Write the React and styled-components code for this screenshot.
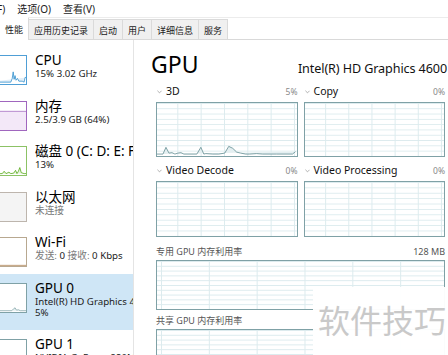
import styled, { createGlobalStyle } from 'styled-components';

const GlobalStyle = createGlobalStyle`
  html, body {
    margin: 0;
    padding: 0;
    background: #fff;
    overflow: hidden;
  }
  body {
    font-family: "Noto Sans", "Noto Sans CJK SC", sans-serif;
    color: #111;
  }
`;

const GPU_BORDER = '#7fa1a6';
const GPU_GRID = '#dcebee';

const Muted = styled.span`
  color: #7a7a7a;
`;

function getSidebarItems() {
  return [
    { id: 'cpu', title: 'CPU', lines: ['15% 3.02 GHz'] },
    { id: 'mem', title: '内存', lines: ['2.5/3.9 GB (64%)'] },
    { id: 'disk', title: '磁盘 0 (C: D: E: F:', lines: ['13%'] },
    { id: 'eth', title: '以太网', lines: [<Muted key="a">未连接</Muted>] },
    {
      id: 'wifi',
      title: 'Wi-Fi',
      lines: [
        <span key="a">
          <Muted>发送:</Muted> 0 <Muted>接收:</Muted> 0 Kbps
        </span>,
      ],
    },
    { id: 'gpu0', title: 'GPU 0', lines: ['Intel(R) HD Graphics 4600', '5%'], active: true },
    { id: 'gpu1', title: 'GPU 1', lines: ['NVIDIA GeForce 820M'] },
  ];
}

const thumbStyles = {
  cpu: { border: '#4f9fd6', bg: '#fff' },
  mem: { border: '#a066be', bg: '#fff' },
  disk: { border: '#8cc265', bg: '#fff' },
  eth: { border: '#bdb5ad', bg: '#f4f4f4' },
  wifi: { border: '#b8a890', bg: '#fff' },
  gpu0: { border: GPU_BORDER, bg: '#fff' },
  gpu1: { border: GPU_BORDER, bg: '#fff' },
};

function ThumbDrawing({ id }) {
  if (id === 'cpu') {
    return (
      <svg viewBox="0 0 40 30" preserveAspectRatio="none" width="100%" height="100%">
        <polyline
          points="0,28 24,28 25.5,24 26.5,17 27.5,25 28.5,21 29.5,26 31,24 32.5,27 36,27 38,28 39,23 40,23"
          fill="#e3eff8"
          stroke="#2a8ccc"
          strokeWidth="0.8"
        />
      </svg>
    );
  }
  if (id === 'mem') {
    return (
      <svg viewBox="0 0 40 30" preserveAspectRatio="none" width="100%" height="100%">
        <rect x="0" y="10" width="40" height="20" fill="#f3e8f8" />
        <line x1="0" y1="10" x2="40" y2="10" stroke="#a066be" strokeWidth="0.8" />
      </svg>
    );
  }
  if (id === 'disk') {
    return (
      <svg viewBox="0 0 40 30" preserveAspectRatio="none" width="100%" height="100%">
        <polyline
          points="0,29 15,28.5 17,26 19,28.5 22,27 24,28.5 27,28 29,25 30.5,28.5 32,26 33.5,22 35,27.5 38,28.5 40,28.5"
          fill="#e6f3dc"
          stroke="#4da60c"
          strokeWidth="0.8"
        />
      </svg>
    );
  }
  if (id === 'wifi') {
    return (
      <svg viewBox="0 0 40 30" preserveAspectRatio="none" width="100%" height="100%">
        <line x1="0" y1="29.3" x2="40" y2="29.3" stroke="#a97a4a" strokeWidth="0.8" />
      </svg>
    );
  }
  if (id === 'gpu0') {
    return (
      <svg viewBox="0 0 40 30" preserveAspectRatio="none" width="100%" height="100%">
        <polyline
          points="0,28.6 25,28.6 27,26.5 28.5,25.5 30,28 32,27.6 34,28.6 40,28.6"
          fill="#e6f0f1"
          stroke="#6f959a"
          strokeWidth="0.7"
        />
      </svg>
    );
  }
  return null;
}

function Chevron() {
  return (
    <ChevronIcon viewBox="0 0 6 4" width="5" height="4">
      <polyline points="0.5,0.5 3,3 5.5,0.5" fill="none" stroke="#8a8a8a" strokeWidth="0.8" />
    </ChevronIcon>
  );
}

const plot3d =
  '0,53 6,53 9,46 12,52 15,51.5 18,53 21,52 24,51.5 27,53 40,53 44,46 47,53 49,52.5 56,53 62,53 68,52 72,45 76,47 80,51 84,52 89,53 93,53 100,52.5 106,53 120,53 136,53 139,50.5';

export default function App() {
  const sidebarItems = getSidebarItems();

  return (
    <Window>
      <GlobalStyle />
      <MenuBar>
        <MenuItem>文件(F)</MenuItem>
        <MenuItem>选项(O)</MenuItem>
        <MenuItem>查看(V)</MenuItem>
      </MenuBar>

      <TabBar>
        <Tab $active>性能</Tab>
        <Tab>应用历史记录</Tab>
        <Tab>启动</Tab>
        <Tab>用户</Tab>
        <Tab>详细信息</Tab>
        <Tab>服务</Tab>
      </TabBar>

      <Body>
        <Sidebar>
          {sidebarItems.map((item) => (
            <SideItem key={item.id} $active={item.active} $tall={item.lines.length > 1}>
              <Thumb $border={thumbStyles[item.id].border} $bg={thumbStyles[item.id].bg}>
                <ThumbDrawing id={item.id} />
              </Thumb>
              <SideInfo>
                <SideTitle>{item.title}</SideTitle>
                {item.lines.map((line, i) => (
                  <SideSub key={i}>{line}</SideSub>
                ))}
              </SideInfo>
            </SideItem>
          ))}
        </Sidebar>

        <Main>
          <Header>
            <BigTitle>GPU</BigTitle>
            <Model>Intel(R) HD Graphics 4600</Model>
          </Header>

          <Graphs>
            <GraphGrid>
              <GraphCell>
                <GraphLabel>
                  <Chevron />
                  <span>3D</span>
                  <Pct>5%</Pct>
                </GraphLabel>
                <GraphBox $h={55} $offset={-3}>
                  <svg viewBox="0 0 140 55" preserveAspectRatio="none" width="100%" height="100%">
                    <polyline points={plot3d} fill="#e4eff1" stroke="#5f8a90" strokeWidth="0.8" />
                  </svg>
                </GraphBox>
              </GraphCell>

              <GraphCell>
                <GraphLabel>
                  <Chevron />
                  <span>Copy</span>
                  <Pct>0%</Pct>
                </GraphLabel>
                <GraphBox $h={55} $offset={-3} />
              </GraphCell>

              <GraphCell>
                <GraphLabel>
                  <Chevron />
                  <span>Video Decode</span>
                  <Pct>0%</Pct>
                </GraphLabel>
                <GraphBox $h={56} $offset={-3} />
              </GraphCell>

              <GraphCell>
                <GraphLabel>
                  <Chevron />
                  <span>Video Processing</span>
                  <Pct>0%</Pct>
                </GraphLabel>
                <GraphBox $h={56} $offset={-3} />
              </GraphCell>
            </GraphGrid>

            <MemSection $first>
              <MemLabel>
                <span>专用 GPU 内存利用率</span>
                <span>128 MB</span>
              </MemLabel>
              <GraphBox $h={50} $offset={4} />
            </MemSection>

            <MemSection>
              <MemLabel>
                <span>共享 GPU 内存利用率</span>
              </MemLabel>
              <GraphBox $h={50} $offset={4} />
            </MemSection>
          </Graphs>
        </Main>
      </Body>

      <Watermark>软件技巧</Watermark>
    </Window>
  );
}

const Window = styled.div`
  position: relative;
  width: 448px;
  height: 355px;
  overflow: hidden;
  display: flex;
  flex-direction: column;
  background: #fff;
`;

const MenuBar = styled.div`
  height: 17px;
  display: flex;
  align-items: center;
  font-size: 10px;
  color: #1a1a1a;
  flex-shrink: 0;
`;

const MenuItem = styled.span`
  padding: 0 6px;

  &:first-child {
    margin-left: -32px;
  }
`;

const TabBar = styled.div`
  height: 21px;
  display: flex;
  align-items: stretch;
  border-top: 1px solid #ececec;
  border-bottom: 1px solid #d9d9d9;
  flex-shrink: 0;
`;

const Tab = styled.div`
  display: flex;
  align-items: center;
  padding: 1px 5px 0;
  font-size: 9px;
  color: #1a1a1a;
  background: ${(p) => (p.$active ? '#fff' : '#f0f0f0')};
  border: 1px solid #dadada;
  border-left: ${(p) => (p.$active ? 'none' : '1px solid #dadada')};
  border-bottom: none;
  margin-right: -1px;
  margin-top: ${(p) => (p.$active ? '-1px' : '1px')};
  ${(p) => p.$active && 'border-top-color: #fff; margin-bottom: -1px;'}
`;

const Body = styled.div`
  flex: 1;
  display: flex;
  min-height: 0;
`;

const Sidebar = styled.div`
  width: 133px;
  flex-shrink: 0;
  padding-top: 6px;
  border-right: 1px solid #e4e4e4;
  overflow: hidden;
`;

const SideItem = styled.div`
  display: flex;
  box-sizing: border-box;
  height: ${(p) => (p.$tall ? '56px' : '45.6px')};
  padding-top: 6px;
  background: ${(p) => (p.$active ? '#cfe6f6' : 'transparent')};
`;

const Thumb = styled.div`
  width: 40px;
  height: 30px;
  margin: 3px 0 0 -13px;
  flex-shrink: 0;
  box-sizing: border-box;
  border: 1px solid ${(p) => p.$border};
  background: ${(p) => p.$bg};
  overflow: hidden;

  svg {
    display: block;
  }
`;

const SideInfo = styled.div`
  margin-left: 8px;
  white-space: nowrap;
`;

const SideTitle = styled.div`
  font-size: 13.5px;
  line-height: 16px;
  color: #000;
`;

const SideSub = styled.div`
  font-size: 9.7px;
  line-height: 11.5px;
  color: #222;
`;

const Main = styled.div`
  flex: 1;
  min-width: 0;
  padding: 10px 1px 0 17px;
  display: flex;
  flex-direction: column;
`;

const Header = styled.div`
  height: 28px;
  display: flex;
  align-items: baseline;
  justify-content: space-between;
  margin-bottom: 6px;
  white-space: nowrap;
`;

const BigTitle = styled.div`
  font-size: 23px;
  line-height: 28px;
  color: #000;
`;

const Model = styled.div`
  font-size: 12.6px;
  letter-spacing: -0.1px;
  color: #111;
`;

const Graphs = styled.div`
  padding: 0 2px 0 5px;
`;

const GraphGrid = styled.div`
  display: grid;
  grid-template-columns: 1fr 1fr;
  column-gap: 6px;
  row-gap: 6px;
`;

const GraphCell = styled.div`
  display: flex;
  flex-direction: column;
`;

const GraphLabel = styled.div`
  height: 14px;
  margin-bottom: 4px;
  display: flex;
  align-items: center;
  font-size: 10.5px;
  color: #111;
  white-space: nowrap;
`;

const ChevronIcon = styled.svg`
  margin: 1px 4px 0 1px;
  flex-shrink: 0;
`;

const Pct = styled.span`
  margin-left: auto;
  font-size: 8.5px;
  color: #888;
`;

const GraphBox = styled.div`
  height: ${(p) => p.$h}px;
  box-sizing: border-box;
  border: 1px solid ${GPU_BORDER};
  background-color: #fff;
  background-image: linear-gradient(to right, ${GPU_GRID} 1px, transparent 1px),
    linear-gradient(to bottom, ${GPU_GRID} 1px, transparent 1px);
  background-size: calc(100% / 6) 100%, 100% 10%;
  background-position: ${(p) => p.$offset}px 0, 0 0;
  overflow: hidden;

  svg {
    display: block;
  }
`;

const MemSection = styled.div`
  margin-top: ${(p) => (p.$first ? '8px' : '4px')};
`;

const MemLabel = styled.div`
  height: 12px;
  margin-bottom: 3px;
  display: flex;
  align-items: center;
  justify-content: space-between;
  font-size: 9px;
  color: #555;
`;

const Watermark = styled.div`
  position: absolute;
  left: 313px;
  top: 287px;
  right: 0;
  bottom: 0;
  box-sizing: border-box;
  padding: 16px 0 0 5px;
  background: rgba(255, 255, 255, 0.97);
  font-family: "Noto Sans CJK SC", sans-serif;
  font-size: 32px;
  line-height: 1;
  color: #c9c9c9;
  white-space: nowrap;
`;
